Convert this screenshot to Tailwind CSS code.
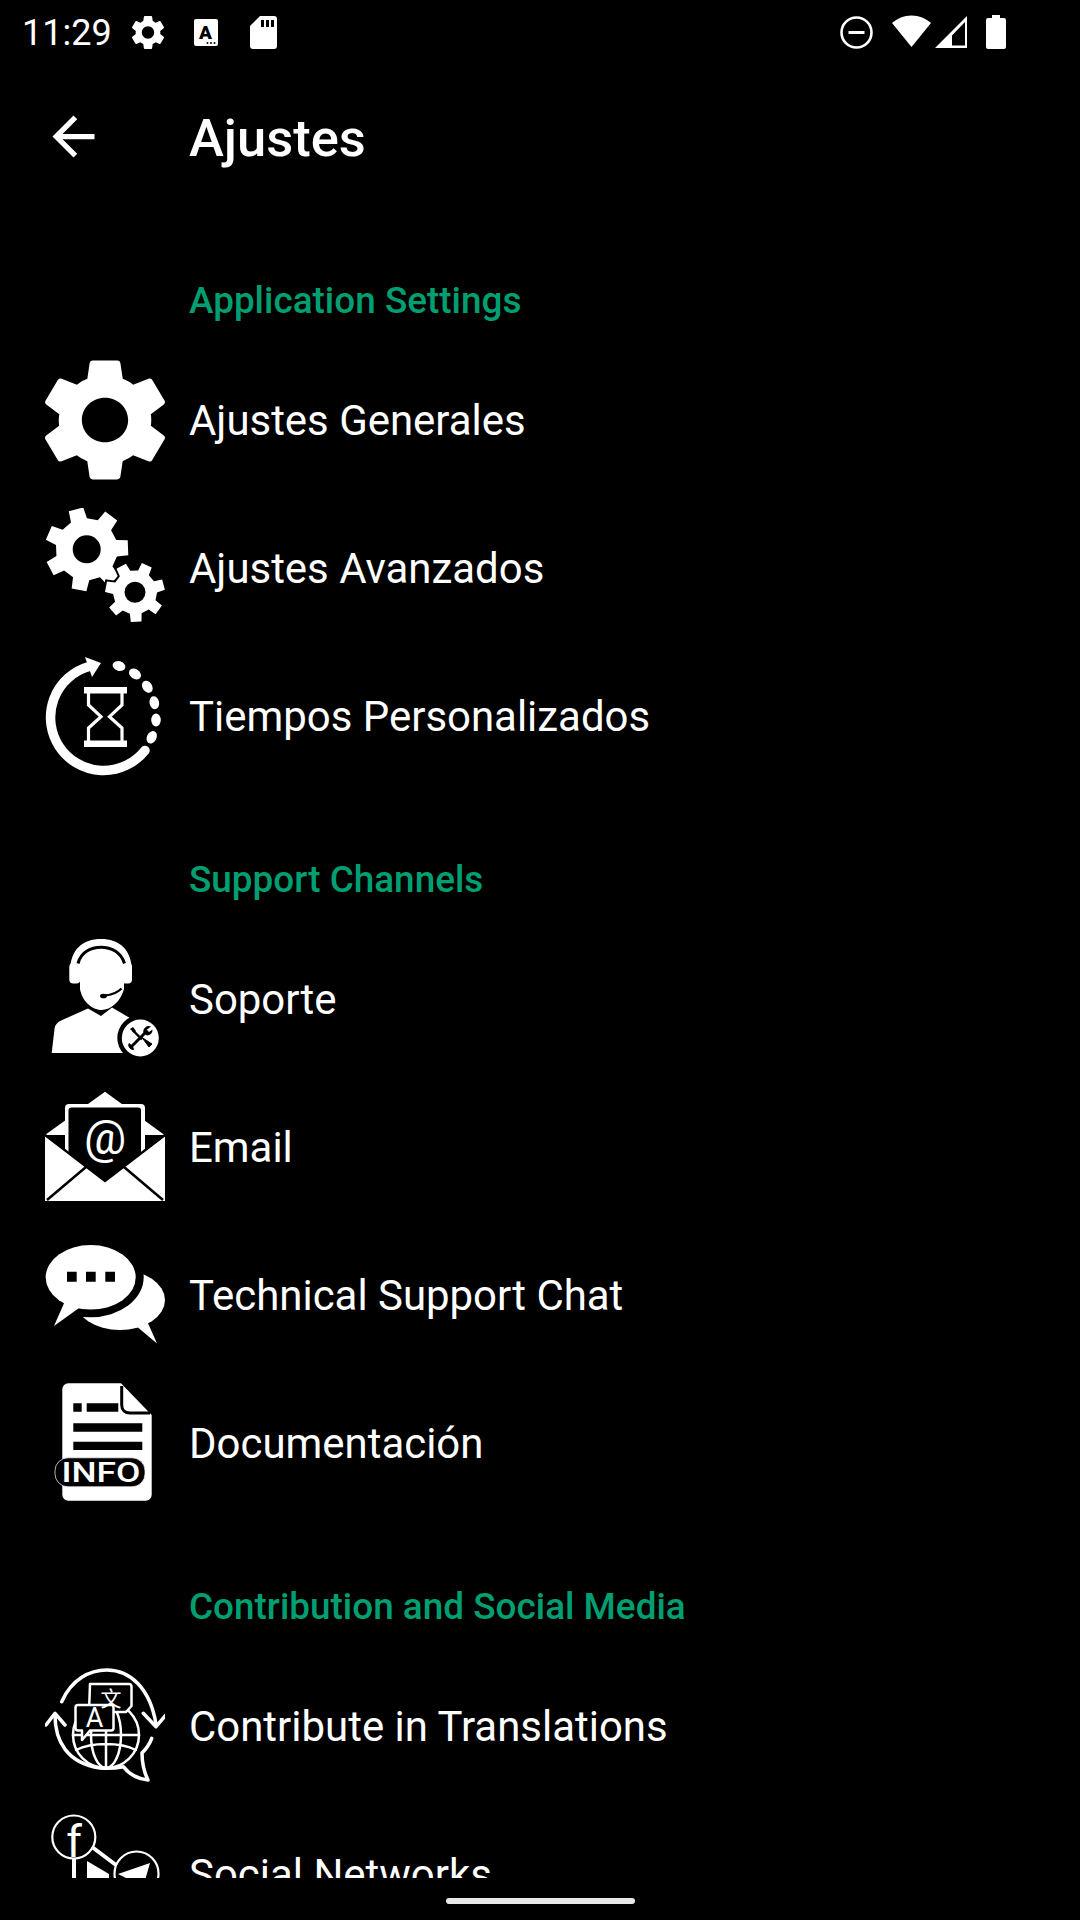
<!doctype html>
<html>
<head>
  <meta charset="UTF-8">
  <meta name="viewport" content="width=device-width, initial-scale=1.0">
  <title>Ajustes</title>
  <script src="https://cdn.jsdelivr.net/npm/@tailwindcss/browser@4"></script>
</head>
<body class="bg-black">
  <div class="w-[1080px] h-[1920px] bg-black text-white flex flex-col overflow-hidden [font-family:Roboto,sans-serif]">

    <!-- Status bar -->
    <div class="h-[63px] shrink-0 flex items-center pl-[22px]">
      <span class="text-[36px] leading-none w-[90px] mt-[2px]">11:29</span>
      <svg class="ml-[20px] mt-[1px]" width="32" height="33" viewBox="2.66 2.4 18.68 19.2" preserveAspectRatio="none" fill="#fff"><path d="M19.14,12.94c0.04-0.3,0.06-0.61,0.06-0.94c0-0.32-0.02-0.64-0.07-0.94l2.03-1.58c0.18-0.14,0.23-0.41,0.12-0.61 l-1.92-3.32c-0.12-0.22-0.37-0.29-0.59-0.22l-2.39,0.96c-0.5-0.38-1.03-0.7-1.62-0.94L14.4,2.81c-0.04-0.24-0.24-0.41-0.48-0.41 h-3.84c-0.24,0-0.43,0.17-0.47,0.41L9.25,5.35C8.66,5.59,8.12,5.92,7.63,6.29L5.24,5.33c-0.22-0.08-0.47,0-0.59,0.22L2.74,8.87 C2.62,9.08,2.66,9.34,2.86,9.48l2.03,1.58C4.84,11.36,4.8,11.69,4.8,12s0.02,0.64,0.07,0.94l-2.03,1.58 c-0.18,0.14-0.23,0.41-0.12,0.61l1.92,3.32c0.12,0.22,0.37,0.29,0.59,0.22l2.39-0.96c0.5,0.38,1.03,0.7,1.62,0.94l0.36,2.54 c0.05,0.24,0.24,0.41,0.48,0.41h3.84c0.24,0,0.44-0.17,0.47-0.41l0.36-2.54c0.59-0.24,1.13-0.56,1.62-0.94l2.39,0.96 c0.22,0.08,0.47,0,0.59-0.22l1.92-3.32c0.12-0.22,0.07-0.47-0.12-0.61L19.14,12.94z M12,15.6c-1.98,0-3.6-1.62-3.6-3.6 s1.62-3.6,3.6-3.6s3.6,1.62,3.6,3.6S13.98,15.6,12,15.6z"/></svg>
      <svg class="ml-[30px] mt-[1px]" width="24" height="27" viewBox="0 0 24 27">
        <rect width="24" height="27" rx="2" fill="#fff"/>
        <text x="11.500" y="19.500" font-size="19" font-weight="900" text-anchor="middle" fill="#000" font-family="Roboto">A</text>
        <circle cx="13.500" cy="24" r="1" fill="#000"/><circle cx="17" cy="24" r="1" fill="#000"/><circle cx="20.500" cy="24" r="1" fill="#000"/>
      </svg>
      <svg class="ml-[32px] mt-[1px]" width="27" height="33" viewBox="0 0 27 33">
        <path d="M10 0H24a3 3 0 0 1 3 3V30a3 3 0 0 1-3 3H3a3 3 0 0 1-3-3V10z" fill="#fff"/>
        <path d="M11 4h3v7h-3zM16 4h3v7h-3zM21 4h3v7h-3z" fill="#000"/>
      </svg>
      <svg class="ml-[563px] mt-[1px]" width="33" height="33" viewBox="0 0 33 33" fill="none">
        <circle cx="16.500" cy="16.500" r="15" stroke="#fff" stroke-width="2.600"/>
        <path d="M8.500 16.500H24.500" stroke="#fff" stroke-width="3"/>
      </svg>
      <svg class="ml-[19px]" width="39" height="33" viewBox="0 0 39 33"><path d="M19.500 32 0 8C5 3.500 12 0.500 19.500 0.500S34 3.500 39 8z" fill="#fff"/></svg>
      <svg class="ml-[4px] mt-[1px]" width="33" height="33" viewBox="0 0 33 33">
        <path fill-rule="evenodd" d="M32 0V32H0zM30 6 17 19.500V29.500H30z" fill="#fff"/>
      </svg>
      <svg class="ml-[18px]" width="20" height="34" viewBox="0 0 20 34"><path d="M6 0H14V3H18a2 2 0 0 1 2 2V32a2 2 0 0 1-2 2H2a2 2 0 0 1-2-2V5a2 2 0 0 1 2-2H6z" fill="#fff"/></svg>
    </div>

    <!-- Toolbar -->
    <div class="h-[147px] shrink-0 flex items-center pl-[42px]">
      <svg width="63" height="63" viewBox="0 0 24 24" fill="#fff"><path d="M20 11H7.830l5.590-5.590L12 4l-8 8 8 8 1.410-1.410L7.830 13H20v-2z"/></svg>
      <h1 class="ml-[84px] mt-[3px] text-[52.5px] leading-none font-medium">Ajustes</h1>
    </div>

    <!-- Lista -->
    <div class="h-[1668px] shrink-0 overflow-hidden">

      <div class="h-[136px] pl-[189px] pt-[69px] text-[36.9px] leading-[44px] font-medium text-[#009f71]">Application Settings</div>

      <div class="h-[148px] flex items-center pl-[45px]">
        <svg class="w-[120px] h-[120px] shrink-0" viewBox="2.660 2.300 18.680 19.400" preserveAspectRatio="none" fill="#fff"><path d="M19.14,12.94c0.04-0.3,0.06-0.61,0.06-0.94c0-0.32-0.02-0.64-0.07-0.94l2.03-1.58c0.18-0.14,0.23-0.41,0.12-0.61 l-1.92-3.32c-0.12-0.22-0.37-0.29-0.59-0.22l-2.39,0.96c-0.5-0.38-1.03-0.7-1.62-0.94L14.4,2.81c-0.04-0.24-0.24-0.41-0.48-0.41 h-3.84c-0.24,0-0.43,0.17-0.47,0.41L9.25,5.35C8.66,5.59,8.12,5.92,7.63,6.29L5.24,5.33c-0.22-0.08-0.47,0-0.59,0.22L2.74,8.87 C2.62,9.08,2.66,9.34,2.86,9.48l2.03,1.58C4.84,11.36,4.8,11.69,4.8,12s0.02,0.64,0.07,0.94l-2.03,1.58 c-0.18,0.14-0.23,0.41-0.12,0.61l1.92,3.32c0.12,0.22,0.37,0.29,0.59,0.22l2.39-0.96c0.5,0.38,1.03,0.7,1.62,0.94l0.36,2.54 c0.05,0.24,0.24,0.41,0.48,0.41h3.84c0.24,0,0.44-0.17,0.47-0.41l0.36-2.54c0.59-0.24,1.13-0.56,1.62-0.94l2.39,0.96 c0.22,0.08,0.47,0,0.59-0.22l1.92-3.32c0.12-0.22,0.07-0.47-0.12-0.61L19.14,12.94z M12,15.6c-1.98,0-3.6-1.62-3.6-3.6 s1.62-3.6,3.6-3.6s3.6,1.62,3.6,3.6S13.98,15.6,12,15.6z"/></svg>
        <span class="ml-[24px] mt-[2px] text-[41.95px] leading-none">Ajustes Generales</span>
      </div>

      <div class="h-[148px] flex items-center pl-[45px]">
        <svg class="w-[120px] h-[120px] shrink-0" viewBox="0 0 120 120">
          <path id="gear_big" fill="#fff" fill-rule="evenodd"/>
          <path id="gear_small" fill="#fff" fill-rule="evenodd" stroke="#000" stroke-width="4" paint-order="stroke"/>
        </svg>
        <span class="ml-[24px] mt-[2px] text-[41.95px] leading-none">Ajustes Avanzados</span>
      </div>

      <div class="h-[148px] flex items-center pl-[45px]">
        <svg class="w-[120px] h-[120px] shrink-0" viewBox="0 0 120 120" fill="none">
          <path d="M100 94.500A53 53 0 1 1 44 10.500" stroke="#fff" stroke-width="9.500" stroke-linecap="round"/>
          <path d="M40 1 56 7 47 21z" fill="#fff"/>
          <g fill="#fff">
            <ellipse cx="74" cy="10" rx="6.500" ry="4.800" transform="rotate(15 74 10)"/>
            <ellipse cx="90" cy="18" rx="6.500" ry="4.800" transform="rotate(35 90 18)"/>
            <ellipse cx="102.300" cy="30.700" rx="6.500" ry="4.800" transform="rotate(55 102.300 30.700)"/>
            <ellipse cx="109.300" cy="46.700" rx="6.500" ry="4.800" transform="rotate(78 109.300 46.700)"/>
            <ellipse cx="111" cy="64" rx="6.500" ry="4.800" transform="rotate(90 111 64)"/>
            <ellipse cx="106.700" cy="81.300" rx="6.500" ry="4.800" transform="rotate(118 106.700 81.300)"/>
            <rect x="39" y="31" width="43" height="6.500"/>
            <rect x="39" y="84.500" width="43" height="6.500"/>
          </g>
          <path d="M43.500 37V49L56 60.700 43.500 72V85M77 37V49L64.500 60.700 77 72V85" stroke="#fff" stroke-width="3.200"/>
        </svg>
        <span class="ml-[24px] mt-[2px] text-[41.95px] leading-none">Tiempos Personalizados</span>
      </div>

      <div class="h-[135px] pl-[189px] pt-[68px] text-[36.9px] leading-[44px] font-medium text-[#009f71]">Support Channels</div>

      <div class="h-[148px] flex items-center pl-[45px]">
        <svg class="w-[120px] h-[120px] shrink-0" viewBox="0 0 120 120" fill="#fff">
          <path d="M25 33C25 10 38 0 56 0S87 10 87 33H79V50C76 62 66 71 56.500 71S37 62 35 50V33z"/>
          <rect x="24.300" y="24" width="11" height="20.500" rx="4"/>
          <rect x="76" y="24" width="11" height="20.500" rx="4"/>
          <path d="M6.700 114 9.500 90C10 85 14 82 18.300 80.500L43 69.500 56 77 67 68.500 90 82V114z"/>
          <path d="M33 24.500C36 13 46 8.300 56 8.300S76 13 79.500 24.500" fill="none" stroke="#000" stroke-width="3"/>
          <path d="M76.500 49.500C73 53 67 56 60 56.500" fill="none" stroke="#000" stroke-width="2.200"/>
          <ellipse cx="58.500" cy="57" rx="3.500" ry="2.300" fill="#000"/>
          <circle cx="95.300" cy="99" r="23" fill="#000"/>
          <circle cx="95.300" cy="99" r="18.500"/>
          <!-- destornillador y llave -->
          <path d="M88 91.500 97 100.500" stroke="#000" stroke-width="2.400"/>
          <path d="M97 98.500 104 108 107 105z" fill="#000" stroke="#000" stroke-width="1"/>
          <path d="M85.500 108.500 102.500 91.500" stroke="#000" stroke-width="3"/>
          <path d="M106 87.500A5.500 5.500 0 0 0 98.500 94L102 96.500A5.500 5.500 0 0 0 107.500 90.500L104 93 101.500 91z" fill="#000"/>
          <path d="M84 104.500A4.500 4.500 0 0 0 88.500 110.500L87.500 107.500z" fill="#000" stroke="#000" stroke-width="1"/>
          <path d="M85 90 88 88 91 92 89 94z" fill="#000"/>
        </svg>
        <span class="ml-[24px] mt-[2px] text-[41.95px] leading-none">Soporte</span>
      </div>

      <div class="h-[148px] flex items-center pl-[45px]">
        <svg class="w-[120px] h-[120px] shrink-0" viewBox="0 0 120 120" fill="#fff">
          <path d="M60 4.700 0 48H119.500z"/>
          <path d="M24 17H96a4 4 0 0 1 4 4V70H20V21a4 4 0 0 1 4-4z"/>
          <path d="M27 20.500H93a3 3 0 0 1 3 3V70L60 95 23.500 70V24a3 3 0 0 1 3.500-3.500z" fill="#000"/>
          <path d="M0 49 60 94 120 49V114H0z"/>
          <path d="M0 48 60 94 120 48" fill="none" stroke="#000" stroke-width="2.500"/>
          <path d="M2 113 41 80M118 113 79 80" stroke="#000" stroke-width="2.500"/>
          <text x="60" y="67" font-size="47" text-anchor="middle" font-family="Roboto">@</text>
        </svg>
        <span class="ml-[24px] mt-[2px] text-[41.95px] leading-none">Email</span>
      </div>

      <div class="h-[148px] flex items-center pl-[45px]">
        <svg class="w-[120px] h-[120px] shrink-0" viewBox="0 0 120 120" fill="#fff">
          <ellipse cx="75" cy="65" rx="45" ry="30"/>
          <path d="M90 90 112 108.500 102 86z"/>
          <ellipse cx="45.700" cy="42.300" rx="53" ry="40" fill="#000"/>
          <ellipse cx="45.700" cy="42.300" rx="45" ry="32.300"/>
          <path d="M20 66 9 91 34 73z"/>
          <path d="M22 36.700h9.700v10H22zM41 36.700h9.700v10H41zM60.300 36.700H70v10h-9.700z" fill="#000"/>
        </svg>
        <span class="ml-[24px] mt-[2px] text-[41.95px] leading-none">Technical Support Chat</span>
      </div>

      <div class="h-[148px] flex items-center pl-[45px]">
        <svg class="w-[120px] h-[120px] shrink-0" viewBox="0 0 120 120" fill="#fff">
          <path d="M23 0.300H76L106.700 32V111.700a6 6 0 0 1-6 6H23.300a6 6 0 0 1-6-6V6.300a6 6 0 0 1 6-6z"/>
          <path d="M76.700 3V22C76.700 27 80 30 85 30H105" fill="none" stroke="#000" stroke-width="3"/>
          <path d="M28.300 20.300h8.400v8.400h-8.400zM41.700 20.300h31.600v8.400H41.700zM28.300 40.300h69v8.400h-69zM28.300 58.700h69v8.400h-69z" fill="#000"/>
          <rect x="10" y="74.800" width="90" height="29" rx="13" fill="#000" stroke="#fff" stroke-width="0.700"/>
          <text x="16.500" y="99" font-size="28" font-weight="500" textLength="79" lengthAdjust="spacingAndGlyphs" font-family="Roboto">INFO</text>
        </svg>
        <span class="ml-[24px] mt-[2px] text-[41.95px] leading-none">Documentación</span>
      </div>

      <div class="h-[135px] pl-[189px] pt-[68px] text-[36.9px] leading-[44px] font-medium text-[#009f71]">Contribution and Social Media</div>

      <div class="h-[148px] flex items-center pl-[45px]">
        <svg class="w-[120px] h-[120px] shrink-0" viewBox="0 0 120 120" fill="none" stroke="#fff" stroke-width="3.500" stroke-linecap="round" stroke-linejoin="round">
          <path d="M16.700 35.700C27 13 45 4 61.700 4 85 4 105 22 111 58"/>
          <path d="M98.300 47.300 111 60.700 121 49"/>
          <path d="M10 49C10 75 22 97 55 102 65 103 72 102 78.300 100.700 84 108 92 113 103 114 98 104 97 96 97 87 102 82 105 77 106.700 72.300"/>
          <path d="M1 59 10 47.300 20 59"/>
          <g stroke-width="2.500">
            <circle cx="61" cy="69" r="33"/>
            <ellipse cx="61" cy="69" rx="15" ry="33"/>
            <path d="M61 36V102M31 84C47 76 75 76 91 84M28 69H94"/>
            <path d="M45 18H84a2.500 2.500 0 0 1 2.500 2.500V40L81 46H44z" fill="#000"/>
            <path d="M33 39H66a2.500 2.500 0 0 1 2.500 2.500V62a2.500 2.500 0 0 1-2.500 2.500H45L37 74V64.500H33A2.500 2.500 0 0 1 30.500 62V41.500A2.500 2.500 0 0 1 33 39z" fill="#000"/>
          </g>
          <text x="66" y="40" font-size="21" text-anchor="middle" fill="#fff" stroke="none" font-family="'Noto Sans CJK SC',sans-serif">文</text>
          <text x="49.500" y="61" font-size="27" text-anchor="middle" fill="#fff" stroke="none" font-family="Roboto">A</text>
        </svg>
        <span class="ml-[24px] mt-[2px] text-[41.95px] leading-none">Contribute in Translations</span>
      </div>

      <div class="h-[148px] flex items-center pl-[45px]">
        <svg class="w-[120px] h-[120px] shrink-0" viewBox="0 0 120 120" fill="none" stroke="#fff">
          <circle cx="28.800" cy="23" r="21.500" stroke-width="2.200"/>
          <text x="29" y="43" font-size="45" text-anchor="middle" fill="#fff" stroke="none" font-family="Roboto">f</text>
          <path d="M29 45V70M47 33 71 51" stroke-width="4"/>
          <path d="M42 47 64 60V70H42z" fill="#fff" stroke="none"/>
          <circle cx="91.500" cy="59.500" r="22" stroke-width="2.200"/>
          <path d="M105 49 73 60 81 64 85 72 90 66 99 70z" fill="#fff" stroke="none"/>
        </svg>
        <span class="ml-[24px] mt-[2px] text-[41.95px] leading-none">Social Networks</span>
      </div>
    </div>

    <!-- Barra de navegacion -->
    <div class="flex-1 flex justify-center pt-[20px]">
      <div class="w-[189px] h-[6px] rounded-full bg-[#e8e8e8]"></div>
    </div>
  </div>

  <script>
    // genera el contorno de un engranaje con su agujero
    function gearPath(cx, cy, rOut, rIn, rHole, teeth, rot) {
      const step = 360 / teeth;
      const pt = (r, deg) => {
        const a = deg * Math.PI / 180;
        return (cx + r * Math.cos(a)).toFixed(2) + " " + (cy + r * Math.sin(a)).toFixed(2);
      };
      let d = "";
      for (let i = 0; i < teeth; i++) {
        const a = rot + i * step;
        d += (i ? "L" : "M") + pt(rIn, a - step * 0.3);
        d += "L" + pt(rOut, a - step * 0.2) + "L" + pt(rOut, a + step * 0.2) + "L" + pt(rIn, a + step * 0.3);
      }
      d += "Z";
      d += "M" + (cx - rHole) + " " + cy + "a" + rHole + " " + rHole + " 0 1 0 " + (rHole * 2) + " 0a" + rHole + " " + rHole + " 0 1 0 " + (-rHole * 2) + " 0Z";
      return d;
    }
    document.getElementById("gear_big").setAttribute("d", gearPath(41.7, 41.3, 42, 31, 14, 7, -105));
    document.getElementById("gear_small").setAttribute("d", gearPath(90, 84.3, 30, 22, 10.5, 7, -15));
  </script>
</body>
</html>
